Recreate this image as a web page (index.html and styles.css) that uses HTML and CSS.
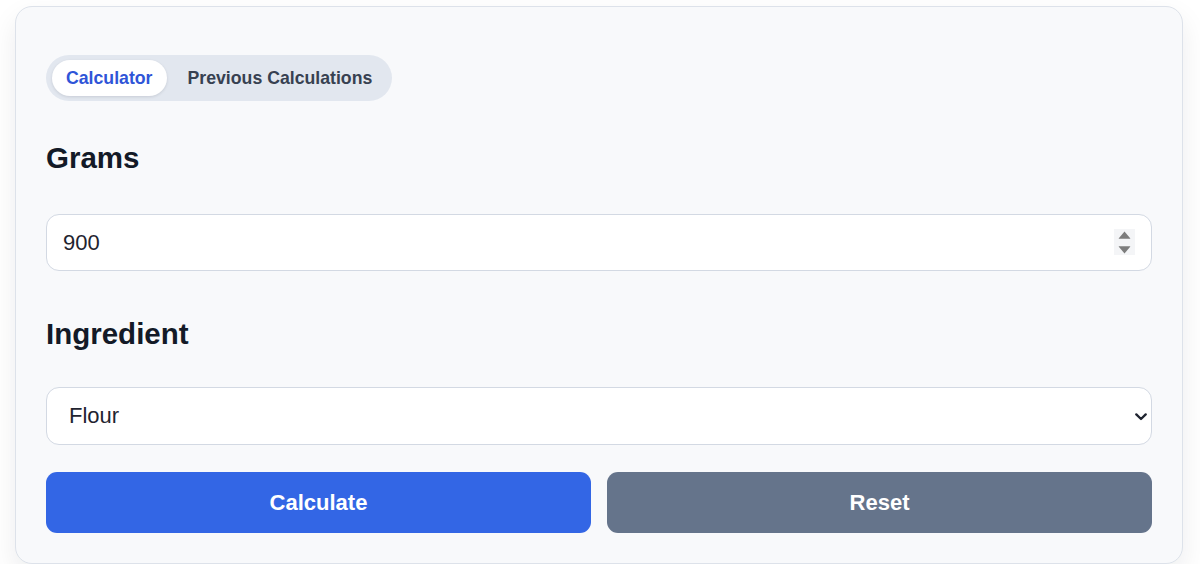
FILE: index.html
```html
<!DOCTYPE html>
<html lang="en">
<head>
<meta charset="utf-8">
<title>Grams Calculator</title>
<link rel="stylesheet" href="styles.css">
</head>
<body>
<div class="page">
  <div class="card">
    <div class="tabs">
      <button class="tab tab--active" type="button">Calculator</button>
      <button class="tab" type="button">Previous Calculations</button>
    </div>

    <h2 class="label">Grams</h2>
    <div class="field field--number">
      <input class="control control--number" type="number" value="900">
      <svg class="spinner" width="21" height="26" viewBox="0 0 21 26" aria-hidden="true">
        <rect x="0" y="0" width="21" height="26" fill="#f4f5f7"/>
        <path d="M10.5 2.5 L16.2 9.2 Q16.6 9.8 15.9 9.8 L5.1 9.8 Q4.4 9.8 4.8 9.2 Z" fill="#7d7d7d"/>
        <path d="M10.5 24.5 L16.2 17.8 Q16.6 17.2 15.9 17.2 L5.1 17.2 Q4.4 17.2 4.8 17.8 Z" fill="#7d7d7d"/>
      </svg>
    </div>

    <h2 class="label label--tight">Ingredient</h2>
    <div class="field field--select">
      <select class="control control--select">
        <option>Flour</option>
        <option>Sugar</option>
        <option>Butter</option>
      </select>
      <svg class="chevron" width="12" height="8" viewBox="0 0 12 8" aria-hidden="true">
        <path d="M1.3 1.4 L6 6 L10.7 1.4" fill="none" stroke="#1f2430" stroke-width="2.3" stroke-linecap="round" stroke-linejoin="round"/>
      </svg>
    </div>

    <div class="actions">
      <button class="btn btn--primary" type="button">Calculate</button>
      <button class="btn btn--secondary" type="button">Reset</button>
    </div>
  </div>
</div>
</body>
</html>
```

FILE: styles.css
```css
* {
  box-sizing: border-box;
}

html, body {
  margin: 0;
  padding: 0;
  background: #ffffff;
}

body {
  font-family: "Liberation Sans", Arial, Helvetica, sans-serif;
  color: #111827;
}

.page {
  padding: 6px 17px 0 15px;
}

.card {
  background: #f8f9fb;
  border: 1px solid #dde2ea;
  border-radius: 17px;
  padding: 48px 30px 30px;
  box-shadow: 0 12px 28px rgba(15, 23, 42, 0.08);
}

.tabs {
  display: inline-flex;
  align-items: center;
  gap: 7px;
  padding: 5px 6px;
  background: #e2e7ef;
  border-radius: 999px;
}

.tab {
  font-family: inherit;
  font-size: 17.7px;
  font-weight: 700;
  line-height: 20px;
  height: 36px;
  padding: 8px 14px;
  border: none;
  border-radius: 999px;
  background: transparent;
  color: #374151;
  cursor: pointer;
}

.tab--active {
  background: #ffffff;
  color: #2f55d8;
  box-shadow: 0 1px 3px rgba(15, 23, 42, 0.12);
}

.label {
  margin: 40px 0 39px;
  font-size: 29.5px;
  line-height: 34px;
  font-weight: 700;
  color: #131a27;
}

.label--tight {
  margin-top: 46px;
  margin-bottom: 36px;
}

.field {
  position: relative;
}

.control {
  display: block;
  width: 100%;
  font-family: inherit;
  font-size: 22px;
  color: #1f2430;
  background: #ffffff;
  border: 1px solid #d3d9e3;
  border-radius: 13px;
  outline: none;
}

.control--number {
  height: 57px;
  padding: 15px 16px;
  line-height: 25px;
  -moz-appearance: textfield;
}

.control--number::-webkit-inner-spin-button,
.control--number::-webkit-outer-spin-button {
  -webkit-appearance: none;
  margin: 0;
}

.control--select {
  height: 58px;
  padding: 15px 40px 15px 22px;
  line-height: 26px;
  -webkit-appearance: none;
  appearance: none;
}

.spinner {
  position: absolute;
  right: 17px;
  top: 15px;
  pointer-events: none;
}

.chevron {
  position: absolute;
  right: 5px;
  top: 26px;
  pointer-events: none;
}

.actions {
  display: grid;
  grid-template-columns: 1fr 1fr;
  gap: 16px;
  margin-top: 27px;
}

.btn {
  height: 61px;
  font-family: inherit;
  font-size: 22px;
  font-weight: 700;
  line-height: 25px;
  color: #ffffff;
  border: none;
  border-radius: 11px;
  cursor: pointer;
}

.btn--primary {
  background: #3366e5;
}

.btn--secondary {
  background: #65748b;
}
```
